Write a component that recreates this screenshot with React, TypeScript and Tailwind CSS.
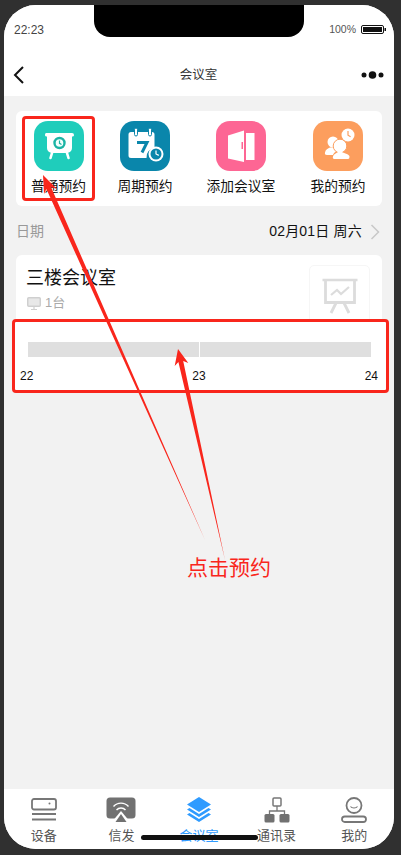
import React from "react";

const IconBoard = () => (
  <svg viewBox="0 0 50 50" className="w-full h-full">
    <path d="M12 12h26a2 2 0 0 1 2 2 1.500 1.500 0 0 1-2 1.500V27a5 5 0 0 1-5 5H18a5 5 0 0 1-5-5V15.500A1.500 1.500 0 0 1 11 14a2 2 0 0 1 1-2z" fill="#fff" />
    <path d="M18 32l-1.500 5M33 32l1.500 5" stroke="#fff" strokeWidth="2.600" strokeLinecap="round" />
    <circle cx="25.500" cy="22" r="5" fill="#f3fffd" stroke="#1cb4a5" strokeWidth="2.400" />
    <path d="M25.500 19.500v2.800l2 1.200" stroke="#1cb4a5" strokeWidth="1.200" fill="none" />
  </svg>
);
const IconCalendar = () => (
  <svg viewBox="0 0 50 50" className="w-full h-full">
    <path d="M11 11h21a2.500 2.500 0 0 1 2.500 2.500V27a9 9 0 0 0-8 10H11a2.500 2.500 0 0 1-2.500-2.500v-21A2.500 2.500 0 0 1 11 11z" fill="#fff" />
    <rect x="14.500" y="7" width="3" height="8" rx="1.500" fill="#fff" stroke="#0a86ab" strokeWidth="1" />
    <rect x="28.500" y="7" width="3" height="8" rx="1.500" fill="#fff" stroke="#0a86ab" strokeWidth="1" />
    <path d="M17 21.500h10l-5 10" stroke="#0a86ab" strokeWidth="3" fill="none" />
    <circle cx="36" cy="33" r="7.500" fill="#fff" />
    <circle cx="36" cy="33" r="5.500" fill="#0a86ab" />
    <path d="M36 29.500V33l2.800 1.400" stroke="#fff" strokeWidth="1.200" fill="none" />
  </svg>
);
const IconDoor = () => (
  <svg viewBox="0 0 50 50" className="w-full h-full">
    <path d="M12 14.500l16-5v31.500l-16-3.500z" fill="#fff" />
    <path d="M30 12h8.500v27H30z" fill="#fff" />
    <rect x="25.500" y="21" width="1.500" height="7" fill="#fd6694" />
  </svg>
);
const IconPeople = () => (
  <svg viewBox="0 0 50 50" className="w-full h-full">
    <circle cx="20" cy="21" r="5.500" fill="#fff" />
    <path d="M14 34c-1.500 0-2.500-.8-2-2.500.5-3 3-4 5-5h6l2 3c-3 1.500-4.500 2.500-5 4.500z" fill="#fff" />
    <circle cx="27" cy="25" r="6.800" fill="#fff" stroke="#fc9e5e" strokeWidth="1" />
    <path d="M21.500 38c-1.500 0-2-.8-1.500-2.500.5-2.500 4-3.500 5-4.500h4c1 1 7.500 2 7.500 4.500 0 1.700-.5 2.500-1.500 2.500z" fill="#fff" />
    <circle cx="35" cy="14" r="6.500" fill="#fff" />
    <path d="M35 10v4.200l2.600 1.600" stroke="#fc9e5e" strokeWidth="1.200" fill="none" />
  </svg>
);

const quick = [
  { label: "普通预约", bg: "bg-[#1fcdbb]", icon: <IconBoard />, item: "w-[55px] ml-[15px]" },
  { label: "周期预约", bg: "bg-[#0a86ab]", icon: <IconCalendar />, item: "w-[56px] ml-[31px]" },
  { label: "添加会议室", bg: "bg-[#fd6694]", icon: <IconDoor />, item: "w-[70px] ml-[33px]" },
  { label: "我的预约", bg: "bg-[#fc9e5e]", icon: <IconPeople />, item: "w-[56px] ml-[34px]" },
];

const TabDevice = () => (
  <svg viewBox="0 0 26 24" className="w-[26px] h-[24px]" fill="none" stroke="#777">
    <rect x="1" y="1" width="24" height="10.500" rx="2" strokeWidth="1.800" />
    <circle cx="18.500" cy="5.500" r="1" fill="#777" stroke="none" />
    <path d="M1 16h24M1 21.500h24" strokeWidth="2" />
  </svg>
);
const TabCast = () => (
  <svg viewBox="0 0 30 26" className="w-[30px] h-[26px]">
    <rect x="0.500" y="0.500" width="29" height="21" rx="3.500" fill="#717171" />
    <path d="M7.500 9.500a10 10 0 0 1 15 0M10.500 13a6 6 0 0 1 9 0" stroke="#fff" strokeWidth="1.400" fill="none" />
    <path d="M15 14l-7.500 9h15z" fill="#fff" />
    <path d="M15 17l-5.500 8h11z" fill="#717171" />
  </svg>
);
const TabLayers = () => (
  <svg viewBox="0 0 26 26" className="w-[26px] h-[26px]" fill="#2f9bff">
    <path d="M13 0l12 7.500L13 15 1 7.500z" />
    <path d="M3.500 11L1 12.500 13 20l12-7.500-2.500-1.500-9.500 6z" />
    <path d="M3.500 16L1 17.500 13 25l12-7.500-2.500-1.500-9.500 6z" />
  </svg>
);
const TabOrg = () => (
  <svg viewBox="0 0 26 26" className="w-[26px] h-[26px]">
    <rect x="9" y="1" width="8" height="8" rx="1" fill="none" stroke="#777" strokeWidth="1.500" />
    <path d="M13 9v5M5.500 17v-3h15v3" stroke="#777" strokeWidth="1.300" fill="none" />
    <rect x="0.500" y="17" width="10" height="8.500" rx="1.500" fill="#717171" />
    <rect x="15.500" y="17" width="10" height="8.500" rx="1.500" fill="#717171" />
  </svg>
);
const TabMe = () => (
  <svg viewBox="0 0 26 26" className="w-[26px] h-[26px]" fill="none" stroke="#777">
    <circle cx="13" cy="8.500" r="7.500" strokeWidth="1.800" />
    <path d="M9.500 9.500c1.500 2 5.500 2 7 0" strokeWidth="1.200" />
    <rect x="1" y="19.500" width="24" height="5.500" rx="2.750" strokeWidth="1.800" />
  </svg>
);

const tabs = [
  { label: "设备", icon: <TabDevice />, active: false },
  { label: "信发", icon: <TabCast />, active: false },
  { label: "会议室", icon: <TabLayers />, active: true },
  { label: "通讯录", icon: <TabOrg />, active: false },
  { label: "我的", icon: <TabMe />, active: false },
];

export default function App() {
  return (
    <div className="w-[401px] h-[855px] bg-[#303030] pt-[5px] pl-[4px] overflow-hidden relative font-['Liberation_Sans','Noto_Sans_CJK_SC',sans-serif]">
      <div className="w-[390px] h-[844px] rounded-[32px] overflow-hidden bg-[#f2f2f2] flex flex-col">
        {/* header */}
        <div className="h-[91px] bg-white flex flex-col shrink-0">
          <div className="h-[46px] flex items-center justify-between pl-[10px] pr-[8px] pt-[3px]">
            <span className="text-[12px] text-[#444]">22:23</span>
            <div className="flex items-center gap-[5px]">
              <span className="text-[10.500px] text-[#555]">100%</span>
              <svg viewBox="0 0 25 9" className="w-[25px] h-[9px]">
                <rect x="0.500" y="0.500" width="22" height="8" rx="1.500" fill="none" stroke="#111" />
                <rect x="2" y="2" width="19" height="5" fill="#111" />
                <rect x="23.500" y="3" width="1.500" height="3" fill="#111" />
              </svg>
            </div>
          </div>
          <div className="flex-1 flex items-center justify-between pl-[9px] pr-[10px] pt-[3px]">
            <div className="w-[23px]">
              <svg viewBox="0 0 11 18" className="w-[11px] h-[18px]" fill="none" stroke="#111" strokeWidth="2">
                <path d="M10 1L2 9l8 8" />
              </svg>
            </div>
            <span className="text-[12.500px] text-[#333]">会议室</span>
            <svg viewBox="0 0 23 8" className="w-[23px] h-[8px]" fill="#111">
              <circle cx="3" cy="4" r="2.500" />
              <circle cx="11.500" cy="4" r="3.800" />
              <circle cx="20" cy="4" r="2.500" />
            </svg>
          </div>
        </div>

        {/* content */}
        <div className="flex-1 flex flex-col pt-[15px] px-[12px]">
          <div className="h-[95px] bg-white rounded-[6px] flex pt-[10px]">
            {quick.map((q) => (
              <div key={q.label} className={`flex flex-col items-center ${q.item}`}>
                <div className={`w-[50px] h-[50px] rounded-[14px] ${q.bg}`}>{q.icon}</div>
                <span className="mt-[6px] text-[13.750px] leading-[20px] text-[#111] whitespace-nowrap">{q.label}</span>
              </div>
            ))}
          </div>

          <div className="h-[49px] flex items-center justify-between pt-[2px]">
            <span className="text-[14px] text-[#999]">日期</span>
            <div className="flex items-center gap-[8px] pr-[2px]">
              <span className="text-[14px] tracking-[0.2px] text-[#111]">02月01日 周六</span>
              <svg viewBox="0 0 10 16" className="w-[10px] h-[16px]" fill="none" stroke="#c8c8c8" strokeWidth="1.500">
                <path d="M1.500 1l7 7-7 7" />
              </svg>
            </div>
          </div>

          <div className="bg-white rounded-t-[6px] h-[64px] flex justify-between pl-[11px] pr-[12px] pt-[10px]">
            <div className="flex flex-col -ml-[1px]">
              <span className="text-[18px] leading-[26px] text-[#111]">三楼会议室</span>
              <div className="flex items-center gap-[4px] mt-[3px] ml-[1px]">
                <svg viewBox="0 0 14 13" className="w-[14px] h-[13px]" fill="none" stroke="#cfcfcf">
                  <rect x="0.750" y="0.750" width="12.500" height="8.500" rx="1" fill="#e8e8e8" strokeWidth="1.500" />
                  <path d="M4 12.500h6M7 10v2" strokeWidth="1.200" />
                </svg>
                <span className="text-[13px] leading-[18px] text-[#aaa]">1台</span>
              </div>
            </div>
            <div className="w-[61px] h-[61px] rounded-[5px] border border-[#f6f6f6] flex items-center justify-center">
              <svg viewBox="0 0 36 36" className="w-[36px] h-[36px]" fill="none" stroke="#dcdcdc">
                <path d="M0.500 2h35" strokeWidth="2.500" />
                <path d="M3.500 3v21.500h29V3" strokeWidth="2.800" />
                <path d="M9 17l6-5 4 4 8-7" strokeWidth="2.200" />
                <path d="M14 25l-5 10M22 25l5 10" strokeWidth="2.800" />
              </svg>
            </div>
          </div>

          {/* timeline inside highlighted frame */}
          <div className="-ml-[4px] w-[377px] h-[74px] bg-white border-[3px] border-[#f9261c] rounded-[4px] pt-[20px] px-[5px]">
            <div className="flex gap-px pl-[8px] pr-[10px] h-[15px]">
              <div className="flex-1 bg-[#dfdfdf]" />
              <div className="flex-1 bg-[#dfdfdf]" />
            </div>
            <div className="flex justify-between pr-[3px] mt-[11px] text-[12px] leading-[16px] text-[#111]">
              <span>22</span>
              <span>23</span>
              <span>24</span>
            </div>
          </div>
        </div>

        {/* tab bar */}
        <div className="h-[60px] bg-white flex shrink-0 pl-[1px] pr-[1px]">
          {tabs.map((t) => (
            <div key={t.label} className="flex-1 flex flex-col items-center pt-[8px]">
              <div className="h-[26px] flex items-center justify-center">{t.icon}</div>
              <span className={`mt-[4px] text-[13px] leading-[18px] ${t.active ? "text-[#2f9bff]" : "text-[#555]"}`}>{t.label}</span>
            </div>
          ))}
        </div>
      </div>

      {/* notch */}
      <div className="absolute left-[94px] top-[5px] w-[210px] h-[32px] bg-black rounded-b-[16px]" />
      {/* home indicator */}
      <div className="absolute left-[141px] top-[835px] w-[117px] h-[5px] bg-[#111] rounded-full" />

      {/* annotations */}
      <div className="absolute left-[22px] top-[116px] w-[73px] h-[85px] border-[3px] border-[#f9261c] rounded-[4px]" />
      <svg className="absolute left-0 top-0 w-[401px] h-[855px] pointer-events-none" viewBox="0 0 401 855">
        <polygon points="43,175 57,189 51,187 205,540 46.400,189 44,194" fill="#f9261c" />
        <polygon points="178,349 188.300,363 183.200,361 225,560 178.400,362 174.700,366" fill="#f9261c" />
      </svg>
      <div className="absolute left-[187px] top-[553px] text-[21px] leading-[30px] text-[#f9261c] whitespace-nowrap">点击预约</div>
    </div>
  );
}
